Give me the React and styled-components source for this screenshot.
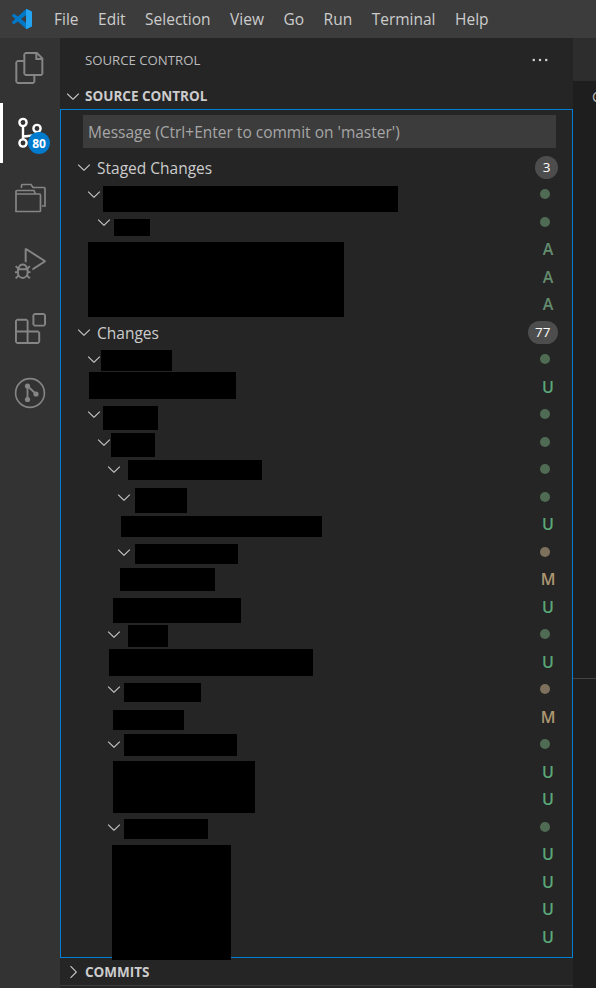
import React from "react";
import styled, { createGlobalStyle } from "styled-components";
import { VscChevronDown, VscChevronRight, VscFiles, VscDebugAlt, VscExtensions, VscEllipsis } from "react-icons/vsc";

const Global = createGlobalStyle`
  html, body { margin: 0; padding: 0; background: #1e1e1e; }
  body { font-family: "Open Sans", "Noto Sans", sans-serif; overflow: hidden; }
`;

const letterColors = { A: "#648d6e", U: "#5aa777", M: "#ad9670" };

const Window = styled.div`
  width: 596px;
  height: 988px;
  display: flex;
  flex-direction: column;
  overflow: hidden;
`;

const TitleBar = styled.div`
  height: 38px;
  flex: none;
  background: #3c3c3c;
  display: flex;
  align-items: center;
  padding-left: 12px;
  color: #cccccc;
  font-size: 15.5px;
`;

const Menu = styled.div`
  display: flex;
  gap: 19.5px;
  margin-left: 22px;
`;

const Body = styled.div`
  flex: 1;
  display: flex;
  min-height: 0;
`;

const ActivityBar = styled.div`
  width: 60px;
  flex: none;
  background: #333333;
  display: flex;
  flex-direction: column;
  gap: 5px;
`;

const ActivityItem = styled.div`
  position: relative;
  height: 60px;
  display: flex;
  align-items: center;
  justify-content: center;
  color: ${(p) => (p.$active ? "#ffffff" : "#858585")};
  border-left: 3px solid ${(p) => (p.$active ? "#ffffff" : "transparent")};
  padding-right: 3px;
  box-sizing: border-box;
`;

const CountBadge = styled.span`
  position: absolute;
  left: 25px;
  top: 29px;
  width: 22px;
  height: 22px;
  border-radius: 50%;
  background: #007acc;
  color: #ffffff;
  font-size: 12px;
  font-weight: 700;
  display: flex;
  align-items: center;
  justify-content: center;
`;

const SideBar = styled.div`
  width: 513px;
  flex: none;
  background: #252526;
  display: flex;
  flex-direction: column;
  position: relative;
`;

const SideTitle = styled.div`
  height: 44px;
  flex: none;
  display: flex;
  align-items: center;
  justify-content: space-between;
  padding: 0 23px 0 25px;
  color: #bbbbbb;
  font-size: 13.2px;
`;

const SectionHeader = styled.div`
  height: ${(p) => (p.$last ? 28 : 27)}px;
  flex: none;
  display: flex;
  align-items: center;
  padding-left: 3px;
  gap: 2px;
  color: #cccccc;
  font-size: 13.5px;
  font-weight: 700;
  box-sizing: border-box;
  border-bottom: ${(p) => (p.$last ? "1px solid #3c3c3c" : "none")};
  margin-bottom: ${(p) => (p.$last ? 2 : 0)}px;
`;

const Panel = styled.div`
  flex: 1;
  min-height: 0;
  position: relative;
  border: 1px solid #007fd4;
  display: flex;
  flex-direction: column;
`;

const CommitInput = styled.div`
  height: 33px;
  flex: none;
  margin: 5px 16px 5px 22px;
  padding-left: 5px;
  background: #3c3c3c;
  color: #a6a6a6;
  font-size: 15.5px;
  display: flex;
  align-items: center;
`;

const Row = styled.div`
  height: 27.5px;
  flex: none;
  display: flex;
  align-items: center;
  padding-left: ${(p) => 13 + p.$depth * 10}px;
  padding-right: 14px;
  color: #cccccc;
  font-size: 15.5px;
`;

const RowLabel = styled.span`
  margin: 2px 0 0 3px;
  flex: 1;
`;

const Spacer = styled.span`
  flex: 1;
`;

const CountPill = styled.span`
  min-width: 23px;
  height: 23px;
  padding: 0 ${(p) => (p.$wide ? 7.5 : 0)}px;
  box-sizing: border-box;
  border-radius: 12px;
  background: #4d4d4d;
  color: #ffffff;
  font-size: 13.5px;
  display: flex;
  align-items: center;
  justify-content: center;
  margin-top: 1px;
`;

const Dot = styled.span`
  width: 10px;
  height: 10px;
  border-radius: 50%;
  margin-right: 8px;
  background: ${(p) => (p.$kind === "m" ? "#7d705c" : "#4f6b53")};
`;

const Letter = styled.span`
  width: 16px;
  margin-right: 2px;
  text-align: center;
  font-size: 16px;
  font-weight: 600;
  color: ${(p) => letterColors[p.$kind]};
`;

const Redacted = styled.div`
  position: absolute;
  left: ${(p) => p.$x - 61}px;
  top: ${(p) => p.$y - 110}px;
  width: ${(p) => p.$w}px;
  height: ${(p) => p.$h}px;
  background: #000000;
  z-index: 2;
`;

const Editor = styled.div`
  flex: 1;
  background: #1e1e1e;
  display: flex;
  flex-direction: column;
  overflow: hidden;
`;

const TabStrip = styled.div`
  height: 43px;
  flex: none;
  background: #2d2d2d;
`;

const Breadcrumb = styled.div`
  height: 30px;
  padding: 6px 0 0 19px;
  box-sizing: border-box;
  color: #bbbbbb;
  font-size: 14px;
  white-space: nowrap;
`;

const EditorPane = styled.div`
  height: 567px;
  flex: none;
  border-bottom: 1px solid #444444;
`;

const menus = ["File", "Edit", "Selection", "View", "Go", "Run", "Terminal", "Help"];

const VsCodeLogo = () => (
  <svg width="20" height="20" viewBox="0 0 24 24" aria-hidden="true">
    <defs>
      <clipPath id="logo-right">
        <rect x="16.8" y="0" width="8" height="24" />
      </clipPath>
    </defs>
    <path fill="#0078c8" d="M23.15 2.587L18.21.21a1.494 1.494 0 0 0-1.705.29l-9.46 8.63-4.12-3.128a.999.999 0 0 0-1.276.057L.327 7.261A1 1 0 0 0 .326 8.74L3.899 12 .326 15.26a1 1 0 0 0 .001 1.479L1.65 17.94a.999.999 0 0 0 1.276.057l4.12-3.128 9.46 8.63a1.492 1.492 0 0 0 1.704.29l4.942-2.377A1.5 1.5 0 0 0 24 20.06V3.939a1.5 1.5 0 0 0-.85-1.352zm-5.146 14.861L10.826 12l7.178-5.448v10.896z" />
    <path fill="#23a3f0" clipPath="url(#logo-right)" d="M23.15 2.587L18.21.21a1.494 1.494 0 0 0-1.705.29L16.8 24a1.492 1.492 0 0 0 1.4-.21l4.942-2.377A1.5 1.5 0 0 0 24 20.06V3.939a1.5 1.5 0 0 0-.85-1.352z" />
  </svg>
);

const ScmIcon = () => (
  <svg width="32" height="32" viewBox="0 0 32 32" fill="none" stroke="currentColor" strokeWidth="2.4" aria-hidden="true">
    <circle cx="9" cy="5.5" r="3.6" />
    <circle cx="23" cy="11.5" r="3.6" />
    <circle cx="9" cy="26" r="3.6" />
    <path d="M9 9v13.4M23 15c0 3-4 4-14 4.5" />
  </svg>
);

const FoldersIcon = () => (
  <svg width="32" height="32" viewBox="0 0 32 32" fill="none" stroke="currentColor" strokeWidth="1.7" aria-hidden="true">
    <path d="M2 29.5h23.5a1 1 0 0 0 1-1V13a1 1 0 0 0-1-1H2v16.5a1 1 0 0 0 0 1zM2 15V9.5a1 1 0 0 1 1-1h17l1.5 3.5" />
    <path d="M7.5 6V3.5a1 1 0 0 1 1-1H17l2 3h11a1 1 0 0 1 1 1V24h-3" />
  </svg>
);

const GitCircleIcon = () => (
  <svg width="32" height="32" viewBox="0 0 32 32" fill="none" stroke="currentColor" aria-hidden="true">
    <circle cx="16" cy="16" r="14.4" strokeWidth="1.6" />
    <path d="M13.5 9l8.5 8M13.5 9v13.5" strokeWidth="1.8" />
    <circle cx="13.5" cy="9" r="2.6" fill="currentColor" stroke="none" />
    <circle cx="22" cy="17" r="2.6" fill="currentColor" stroke="none" />
    <circle cx="13.5" cy="22.5" r="2.6" fill="currentColor" stroke="none" />
  </svg>
);

// depth: chevron indent, status: right hand marker
const rows = [
  { depth: 0, label: "Staged Changes", count: "3" },
  { depth: 1, dot: "u" },
  { depth: 2, dot: "u" },
  { letter: "A" },
  { letter: "A" },
  { letter: "A" },
  { depth: 0, label: "Changes", count: "77" },
  { depth: 1, dot: "u" },
  { letter: "U" },
  { depth: 1, dot: "u" },
  { depth: 2, dot: "u" },
  { depth: 3, dot: "u" },
  { depth: 4, dot: "u" },
  { letter: "U" },
  { depth: 4, dot: "m" },
  { letter: "M" },
  { letter: "U" },
  { depth: 3, dot: "u" },
  { letter: "U" },
  { depth: 3, dot: "m" },
  { letter: "M" },
  { depth: 3, dot: "u" },
  { letter: "U" },
  { letter: "U" },
  { depth: 3, dot: "u" },
  { letter: "U" },
  { letter: "U" },
  { letter: "U" },
  { letter: "U" },
];

const blocks = [
  [103, 186, 295, 26],
  [114, 219, 36, 17],
  [88, 242, 256, 75],
  [101, 350, 71, 21],
  [89, 372, 147, 27],
  [103, 406, 55, 24],
  [111, 433, 44, 24],
  [128, 460, 134, 20],
  [135, 488, 52, 25],
  [121, 516, 201, 21],
  [135, 544, 103, 20],
  [120, 568, 95, 23],
  [113, 598, 128, 25],
  [128, 625, 40, 22],
  [109, 649, 204, 27],
  [124, 683, 77, 19],
  [113, 710, 71, 20],
  [124, 734, 113, 22],
  [113, 761, 142, 52],
  [124, 819, 84, 20],
  [112, 845, 119, 115],
];

const App = () => (
  <Window>
    <Global />
    <TitleBar>
      <VsCodeLogo />
      <Menu>
        {menus.map((m) => (
          <span key={m}>{m}</span>
        ))}
      </Menu>
    </TitleBar>
    <Body>
      <ActivityBar>
        <ActivityItem><VscFiles size={32} /></ActivityItem>
        <ActivityItem $active>
          <ScmIcon />
          <CountBadge>80</CountBadge>
        </ActivityItem>
        <ActivityItem><FoldersIcon /></ActivityItem>
        <ActivityItem><VscDebugAlt size={31} /></ActivityItem>
        <ActivityItem><VscExtensions size={31} /></ActivityItem>
        <ActivityItem><GitCircleIcon /></ActivityItem>
      </ActivityBar>
      <SideBar>
        <SideTitle>
          <span>SOURCE CONTROL</span>
          <VscEllipsis size={20} color="#d4d4d4" />
        </SideTitle>
        <SectionHeader>
          <VscChevronDown size={20} />
          SOURCE CONTROL
        </SectionHeader>
        <Panel>
          <CommitInput>Message (Ctrl+Enter to commit on 'master')</CommitInput>
          {rows.map((r, i) => (
            <Row key={i} $depth={r.depth || 0}>
              {r.depth !== undefined && <VscChevronDown size={20} color="#c5c5c5" />}
              {r.label ? <RowLabel>{r.label}</RowLabel> : <Spacer />}
              {r.count && <CountPill $wide={r.count.length > 1}>{r.count}</CountPill>}
              {r.dot && <Dot $kind={r.dot} />}
              {r.letter && <Letter $kind={r.letter}>{r.letter}</Letter>}
            </Row>
          ))}
          {blocks.map(([x, y, w, h], i) => (
            <Redacted key={i} $x={x} $y={y} $w={w} $h={h} />
          ))}
        </Panel>
        <SectionHeader $last>
          <VscChevronRight size={20} />
          COMMITS
        </SectionHeader>
      </SideBar>
      <Editor>
        <TabStrip />
        <Breadcrumb>C</Breadcrumb>
        <EditorPane />
      </Editor>
    </Body>
  </Window>
);

export default App;
